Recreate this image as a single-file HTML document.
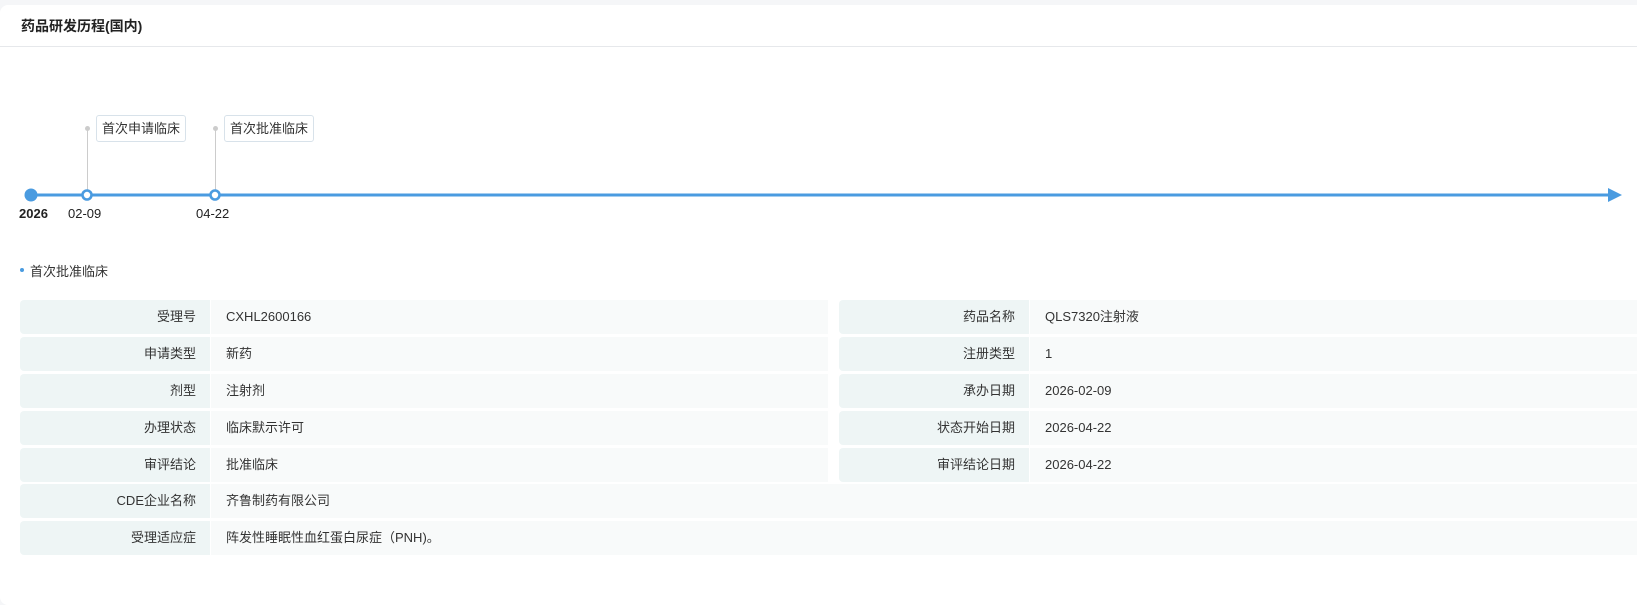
<!DOCTYPE html>
<html><head><meta charset="utf-8"><style>
*{margin:0;padding:0;box-sizing:border-box}
body{width:1637px;height:577px;background:#f5f6f8;font-family:"Liberation Sans","Noto Sans CJK SC",sans-serif;color:#333;overflow:hidden;position:relative}
.card{position:absolute;left:0;top:5px;width:1660px;height:600px;background:#fff;border-radius:8px}
.hd{height:42px;border-bottom:1px solid #e6e8eb;padding-left:21px;font-weight:bold;font-size:14px;line-height:43px;color:#222}
.a{position:absolute}
.tag{position:absolute;top:110px;height:27px;border:1px solid #d8e2ea;border-radius:3px;font-size:13px;line-height:25px;padding:0 5px;background:#fff;color:#333}
.stem{position:absolute;width:1px;background:#ccc;top:123px;height:62px}
.sd{position:absolute;width:5px;height:5px;border-radius:50%;background:#ccc;top:121px}
.dt{position:absolute;top:201px;font-size:13px;color:#222}
.l{position:absolute;background:#eef5f5;text-align:right;padding-right:14px;height:34px;line-height:34px;font-size:13px;border-radius:4px 0 0 4px;color:#333;width:190px}
.v{position:absolute;background:#f8fafa;padding-left:15px;height:34px;line-height:34px;font-size:13px;color:#333}
</style></head><body>
<div class="card">
<div class="hd">药品研发历程(国内)</div>
<div class="sd" style="left:85px"></div><div class="stem" style="left:87px"></div>
<div class="sd" style="left:213px"></div><div class="stem" style="left:215px"></div>
<div class="tag" style="left:96px">首次申请临床</div>
<div class="tag" style="left:224px">首次批准临床</div>
<svg class="a" style="left:0;top:178px" width="1637" height="30">
<line x1="31" y1="12" x2="1610" y2="12" stroke="#4a9be0" stroke-width="3"/>
<polygon points="1608,5 1622,12 1608,19" fill="#4a9be0"/>
<circle cx="31" cy="12" r="6.5" fill="#4a9be0"/>
<circle cx="87" cy="12" r="4.5" fill="#fff" stroke="#4a9be0" stroke-width="2.6"/>
<circle cx="215" cy="12" r="4.5" fill="#fff" stroke="#4a9be0" stroke-width="2.6"/>
</svg>
<div class="dt" style="left:19px;font-weight:bold">2026</div>
<div class="dt" style="left:68px">02-09</div>
<div class="dt" style="left:196px">04-22</div>
<div class="a" style="left:20px;top:263px;width:4px;height:4px;border-radius:50%;background:#4a9be0"></div>
<div class="a" style="left:30px;top:256px;font-size:13px;color:#333">首次批准临床</div>

<div class="l" style="left:20px;top:295px">受理号</div><div class="v" style="left:211px;top:295px;width:617px">CXHL2600166</div>
<div class="l" style="left:839px;top:295px">药品名称</div><div class="v" style="left:1030px;top:295px;width:640px">QLS7320注射液</div>

<div class="l" style="left:20px;top:332px">申请类型</div><div class="v" style="left:211px;top:332px;width:617px">新药</div>
<div class="l" style="left:839px;top:332px">注册类型</div><div class="v" style="left:1030px;top:332px;width:640px">1</div>

<div class="l" style="left:20px;top:369px">剂型</div><div class="v" style="left:211px;top:369px;width:617px">注射剂</div>
<div class="l" style="left:839px;top:369px">承办日期</div><div class="v" style="left:1030px;top:369px;width:640px">2026-02-09</div>

<div class="l" style="left:20px;top:406px">办理状态</div><div class="v" style="left:211px;top:406px;width:617px">临床默示许可</div>
<div class="l" style="left:839px;top:406px">状态开始日期</div><div class="v" style="left:1030px;top:406px;width:640px">2026-04-22</div>

<div class="l" style="left:20px;top:443px">审评结论</div><div class="v" style="left:211px;top:443px;width:617px">批准临床</div>
<div class="l" style="left:839px;top:443px">审评结论日期</div><div class="v" style="left:1030px;top:443px;width:640px">2026-04-22</div>

<div class="l" style="left:20px;top:479px">CDE企业名称</div><div class="v" style="left:211px;top:479px;width:1460px">齐鲁制药有限公司</div>

<div class="l" style="left:20px;top:516px">受理适应症</div><div class="v" style="left:211px;top:516px;width:1460px">阵发性睡眠性血红蛋白尿症（PNH)。</div>
</div>
</body></html>
